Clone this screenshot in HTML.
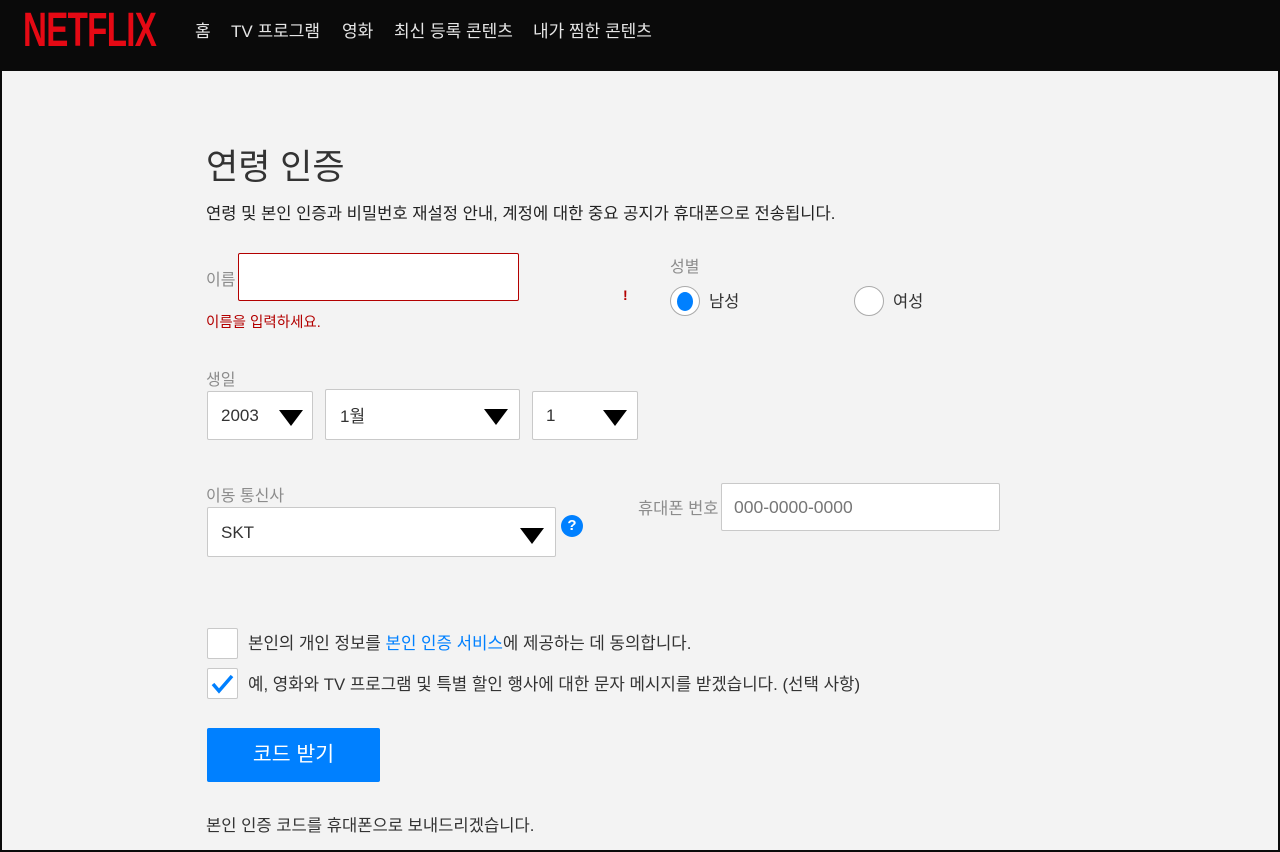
<!DOCTYPE html>
<html><head><meta charset="utf-8"><style>
*{box-sizing:border-box;margin:0;padding:0}
body{width:1280px;height:852px;background:#0a0a0a;font-family:"Liberation Sans","Noto Sans CJK KR",sans-serif;position:relative;overflow:hidden}
.main{position:absolute;left:2px;top:71px;width:1276px;height:779px;background:#f3f3f3}
.a{position:absolute;white-space:nowrap}
.nav{color:#e5e5e5;font-size:17px;top:17px}
.box{position:absolute;background:#fff;border:1px solid #c9c9c9;border-radius:2px}
.tri{position:absolute;width:0;height:0;border-left:12px solid transparent;border-right:12px solid transparent;border-top:16px solid #000}
.lbl{color:#8c8c8c;font-size:16px}
.t{color:#333;font-size:17px}
</style></head><body>
<div class="a" style="left:23px;top:8px;color:#e50914;font-family:'Liberation Sans',sans-serif;font-weight:bold;font-size:48px;letter-spacing:-1px;transform:scaleX(0.69);transform-origin:left;line-height:46px">NETFLIX</div>
<div class="a nav" style="left:195px">홈</div>
<div class="a nav" style="left:231px">TV 프로그램</div>
<div class="a nav" style="left:342px">영화</div>
<div class="a nav" style="left:394px">최신 등록 콘텐츠</div>
<div class="a nav" style="left:533px">내가 찜한 콘텐츠</div>
<div class="main"></div>
<div class="a" style="left:206px;top:139px;font-size:35px;color:#333">연령 인증</div>
<div class="a" style="left:206px;top:200px;font-size:16.6px;color:#222">연령 및 본인 인증과 비밀번호 재설정 안내, 계정에 대한 중요 공지가 휴대폰으로 전송됩니다.</div>
<div class="a lbl" style="left:206px;top:266px">이름</div>
<div class="box" style="left:238px;top:253px;width:281px;height:48px;border-color:#b30000"></div>
<div class="a" style="left:206px;top:311px;font-size:14.5px;color:#b30000">이름을 입력하세요.</div>
<div class="a" style="left:623px;top:287px;font-size:14px;color:#b30000;font-weight:bold">!</div>
<div class="a lbl" style="left:670px;top:253px">성별</div>
<div class="a" style="left:670px;top:286px;width:30px;height:30px;border-radius:50%;background:#fff;border:1px solid #aaa"><div style="position:absolute;left:6px;top:5px;width:16px;height:19px;border-radius:50%;background:#0080ff"></div></div>
<div class="a t" style="left:709px;top:288px;font-size:16.5px">남성</div>
<div class="a" style="left:854px;top:286px;width:30px;height:30px;border-radius:50%;background:#fff;border:1px solid #aaa"></div>
<div class="a t" style="left:893px;top:288px;font-size:16.5px">여성</div>
<div class="a lbl" style="left:206px;top:366px">생일</div>
<div class="box" style="left:207px;top:391px;width:106px;height:49px"></div>
<div class="a t" style="left:221px;top:406px">2003</div><div class="tri" style="left:279px;top:410px"></div>
<div class="box" style="left:325px;top:389px;width:195px;height:51px"></div>
<div class="a t" style="left:340px;top:402px">1월</div><div class="tri" style="left:484px;top:409px"></div>
<div class="box" style="left:532px;top:391px;width:106px;height:49px"></div>
<div class="a t" style="left:546px;top:406px">1</div><div class="tri" style="left:603px;top:410px"></div>
<div class="a lbl" style="left:206px;top:482px">이동 통신사</div>
<div class="box" style="left:207px;top:507px;width:349px;height:50px"></div>
<div class="a t" style="left:221px;top:523px">SKT</div><div class="tri" style="left:520px;top:528px"></div>
<div class="a" style="left:561px;top:515px;width:22px;height:22px;border-radius:50%;background:#0080ff;color:#fff;font-size:15px;font-weight:bold;text-align:center;line-height:22px">?</div>
<div class="a lbl" style="left:638px;top:495px;font-size:16.5px">휴대폰 번호</div>
<div class="box" style="left:721px;top:483px;width:279px;height:48px"></div>
<div class="a" style="left:734px;top:497px;font-size:17.5px;color:#777">000-0000-0000</div>
<div class="box" style="left:207px;top:628px;width:31px;height:31px"></div>
<div class="a t" style="left:248px;top:630px;font-size:16.8px">본인의 개인 정보를 <span style="color:#0080ff">본인 인증 서비스</span>에 제공하는 데 동의합니다.</div>
<div class="box" style="left:207px;top:668px;width:31px;height:31px"><svg width="31" height="31" style="position:absolute;left:-1px;top:-1px"><path d="M6 16 L12 23 L25 8" stroke="#0080ff" stroke-width="3.5" fill="none"/></svg></div>
<div class="a t" style="left:248px;top:671px;font-size:16.8px">예, 영화와 TV 프로그램 및 특별 할인 행사에 대한 문자 메시지를 받겠습니다. (선택 사항)</div>
<div class="a" style="left:207px;top:728px;width:173px;height:54px;background:#0080ff;border-radius:2px;color:#fff;font-size:20.5px;text-align:center;line-height:54px">코드 받기</div>
<div class="a" style="left:206px;top:812px;font-size:16.6px;color:#333">본인 인증 코드를 휴대폰으로 보내드리겠습니다.</div>
</body></html>
